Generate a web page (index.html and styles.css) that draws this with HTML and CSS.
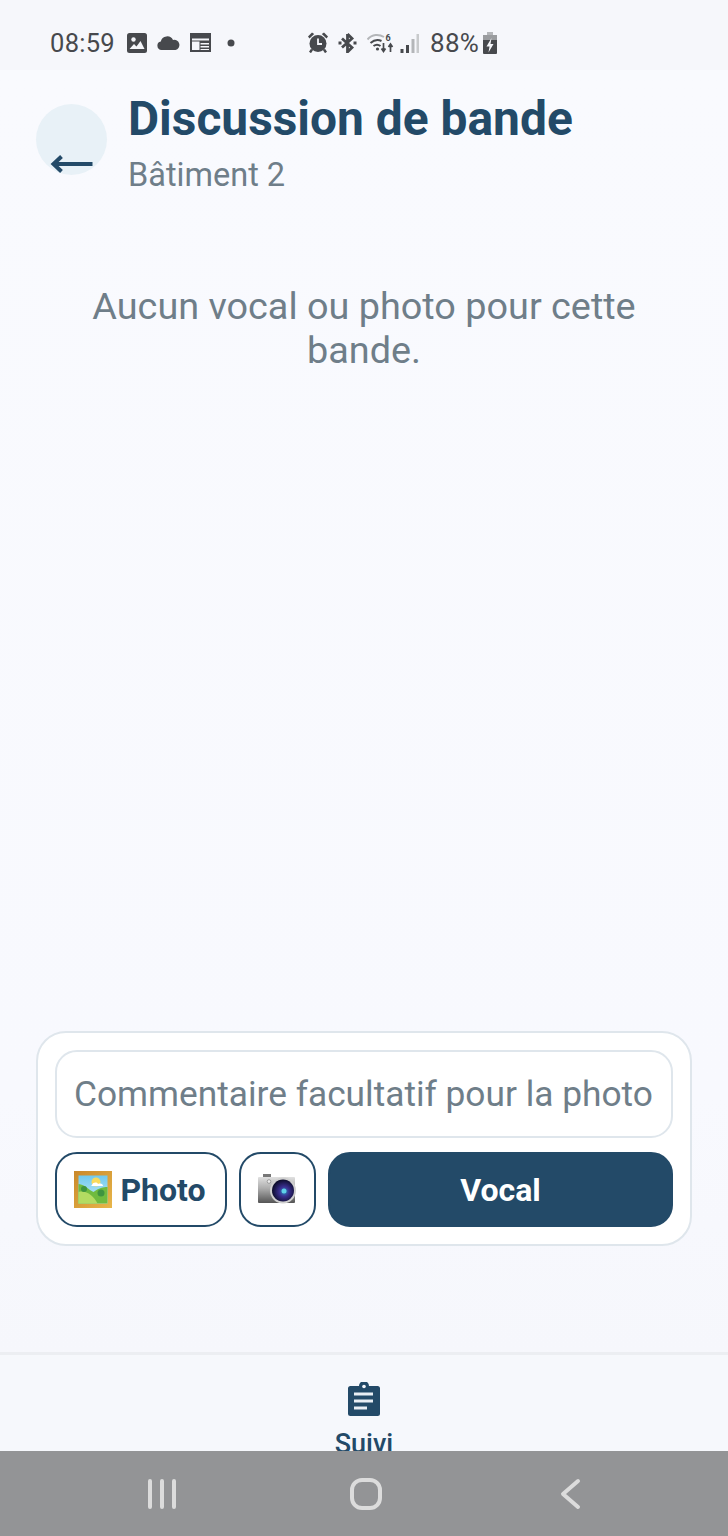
FILE: index.html
```html
<!DOCTYPE html>
<html lang="fr">
<head>
<meta charset="utf-8">
<title>Discussion de bande</title>
<link rel="stylesheet" href="styles.css">
</head>
<body>
<div class="screen">
  <div class="status">
    <div class="status-left">
      <span class="clock">08:59</span>
      <svg class="i-img" width="20" height="20" viewBox="0 0 20 20"><rect width="20" height="20" rx="2.500" fill="#47494d"/><circle cx="6.500" cy="6.500" r="2.200" fill="#f5f6fa"/><path d="M2.500 16l4.500-5 2.500 2.500 4-5.500 4 8z" fill="#f5f6fa"/></svg>
      <svg class="i-cloud" width="23" height="14" viewBox="0 0 23 14"><path d="M4.500 14A4.300 4.300 0 0 1 3.800 5.500 6.500 6.500 0 0 1 16 4a5 5 0 0 1 2.500 10z" fill="#47494d"/></svg>
      <svg class="i-cal" width="21" height="19" viewBox="0 0 21 19"><path d="M1 2h19v16H1z" fill="none" stroke="#47494d" stroke-width="2"/><path d="M0 0h21v5.500H0z" fill="#47494d"/><path d="M10.500 7.500h9v2.500h-9zM10.500 11.500h8.500v1.500h-8.500zM10.500 14.500h8.500v1.500h-8.500zM1 7.500h9v1H1zM9.500 7.500h1v10h-1z" fill="#47494d"/></svg>
      <svg class="i-dot" width="8" height="8" viewBox="0 0 8 8"><circle cx="4" cy="4" r="3.500" fill="#47494d"/></svg>
    </div>
    <div class="status-right">
      <svg class="i-alarm" width="20" height="21" viewBox="0 0 20 21"><circle cx="10" cy="11.500" r="8.500" fill="#47494d"/><path d="M10 6.500v5.500h4" fill="none" stroke="#f5f6fa" stroke-width="1.800"/><path d="M0 4.500L4 0.500l2.200 1.500L1.500 6.500zM20 4.500L16 0.500 13.800 2l4.700 4.500z" fill="#47494d"/><path d="M4 17.500l-2 3M16 17.500l2 3" stroke="#47494d" stroke-width="2.400"/></svg>
      <svg class="i-bt" width="19" height="20" viewBox="0 0 19 20"><path d="M9.500 1v18l4.500-4.500-10-9M9.500 1L14 5.500l-10 9" fill="none" stroke="#47494d" stroke-width="2.800"/><path d="M0.500 10h3M15.500 10h3" stroke="#47494d" stroke-width="3"/></svg>
      <svg class="i-wifi" width="27" height="22" viewBox="0 0 27 22"><path d="M0.500 7.500C5 2 12 2 17 5" fill="none" stroke="#b4b6b9" stroke-width="2"/><path d="M3.500 11c4-3.500 8-3.500 11-2M6.500 14c2-1.500 5-1.500 7 0" fill="none" stroke="#47494d" stroke-width="2"/><circle cx="10.500" cy="17" r="1.600" fill="#47494d"/><path d="M16.500 11v8M14.500 16.500l2 3 2-3M23.500 20v-7M21.500 15l2-3 2 3" fill="none" stroke="#47494d" stroke-width="1.700"/><text class="wifi-six" x="18.500" y="9">6</text></svg>
      <svg class="i-signal" width="19" height="22" viewBox="0 0 19 22"><path d="M0.500 17h3v4h-3z" fill="#47494d"/><path d="M6 13h3v8H6z" fill="#47494d"/><path d="M11.500 7h3v14h-3z" fill="#b4b6b9"/><path d="M16.500 2h2.500v19h-2.500z" fill="#c8cacc"/></svg>
      <span class="batt-text">88%</span>
      <svg class="i-batt" width="14" height="22" viewBox="0 0 14 22"><path d="M4 0h6v3H4z" fill="#b4b6b9"/><path d="M0 3h14v5H0z" fill="#9a9c9f"/><path d="M0 8h14v13a1 1 0 0 1-1 1H1a1 1 0 0 1-1-1z" fill="#47494d"/><path d="M8.500 6l-5 8.500h3l-1 6 5-8.500h-3z" fill="#f5f6fa"/></svg>
    </div>
  </div>

  <main class="main">
    <header class="head">
      <div class="back">
        <svg class="back-arrow" width="44" height="20" viewBox="0 0 44 20"><path d="M42.500 10H5" stroke="#234a68" stroke-width="4"/><path d="M11.500 2.500L3.500 10l8 7.500" fill="none" stroke="#234a68" stroke-width="4"/></svg>
      </div>
      <div class="head-text">
        <h1 class="title">Discussion de bande</h1>
        <p class="subtitle">Bâtiment 2</p>
      </div>
    </header>
    <p class="empty">Aucun vocal ou photo pour cette bande.</p>
    <section class="composer">
      <div class="field">Commentaire facultatif pour la photo</div>
      <div class="actions">
        <button class="btn btn-photo">
          <svg width="38" height="37" viewBox="0 0 38 37"><defs><linearGradient id="fr" x1="0" y1="0" x2="1" y2="1"><stop offset="0" stop-color="#c9882a"/><stop offset="1" stop-color="#e8b64a"/></linearGradient><linearGradient id="sky" x1="0" y1="0" x2="0" y2="1"><stop offset="0" stop-color="#6fc9f0"/><stop offset="1" stop-color="#c8ecf5"/></linearGradient></defs><rect width="38" height="37" fill="url(#fr)"/><rect x="4.500" y="4.500" width="29" height="28" fill="url(#sky)"/><circle cx="22" cy="11" r="4.500" fill="#f8da5c"/><path d="M18 14c1-3 5-3 6-1 3-1 5 0 5 2H17z" fill="#fff"/><path d="M4.500 13c7 .5 10 6 15 8 5-4 10-5 14-5v16.500h-29z" fill="#6fbb3f"/><path d="M4.500 21c8-2 15 4 19 11.500h-19z" fill="#b3dc62"/><circle cx="10" cy="18" r="3" fill="#3f9440"/><circle cx="27" cy="22" r="3.500" fill="#3f9440"/></svg>
          <span>Photo</span>
        </button>
        <button class="btn btn-cam">
          <svg width="38" height="31" viewBox="0 0 38 31"><defs><linearGradient id="cb" x1="0" y1="0" x2="0" y2="1"><stop offset="0" stop-color="#e0e0e0"/><stop offset=".45" stop-color="#ababab"/><stop offset="1" stop-color="#555"/></linearGradient><radialGradient id="cl" cx=".55" cy=".55" r=".55"><stop offset="0" stop-color="#2a8fc0"/><stop offset=".4" stop-color="#3a2f90"/><stop offset="1" stop-color="#0c0c2a"/></radialGradient></defs><rect x="5" y="0" width="8" height="3" fill="#777"/><rect x="0" y="3" width="37" height="26" rx="1" fill="url(#cb)"/><circle cx="11" cy="7.500" r="1.800" fill="#eee" stroke="#777" stroke-width=".6"/><circle cx="25" cy="16.500" r="13" fill="#d0d0d0"/><circle cx="25" cy="16.500" r="11" fill="url(#cl)"/><circle cx="26" cy="17" r="2.500" fill="#5fd0e8"/></svg>
        </button>
        <button class="btn btn-vocal">Vocal</button>
      </div>
    </section>
  </main>

  <nav class="tabbar">
    <div class="tab">
      <svg class="tab-icon" width="32" height="34" viewBox="0 0 32 34"><path d="M2.500 4H11a5 5 0 0 1 10 0h8.500A2.500 2.500 0 0 1 32 6.500v25a2.500 2.500 0 0 1-2.500 2.500h-27A2.500 2.500 0 0 1 0 31.500v-25A2.500 2.500 0 0 1 2.500 4z" fill="#234a68"/><circle cx="16" cy="4.500" r="1.800" fill="#f6f8fc"/><path d="M6 10.500h19v3H6zM6 17.500h19v3H6zM6 24.500h13v3H6z" fill="#e8eef4"/></svg>
      <span class="tab-label">Suivi</span>
    </div>
  </nav>

  <div class="sysnav">
    <svg width="32" height="32" viewBox="0 0 32 32"><path d="M4 3v26M16 3v26M28 3v26" stroke="#dcdcdc" stroke-width="4" stroke-linecap="round"/></svg>
    <svg width="32" height="32" viewBox="0 0 32 32"><rect x="2" y="2" width="28" height="28" rx="10" fill="none" stroke="#dcdcdc" stroke-width="4"/></svg>
    <svg class="nav-back" width="24" height="32" viewBox="0 0 24 32"><path d="M20 3L5 16l15 13" fill="none" stroke="#dcdcdc" stroke-width="4" stroke-linecap="round" stroke-linejoin="round"/></svg>
  </div>
</div>
</body>
</html>
```
FILE: styles.css
```css
* { box-sizing: border-box; }
html, body { margin: 0; padding: 0; }
body { font-family: Roboto, "Noto Sans", sans-serif; background: #f8f9fe; }
.screen { width: 728px; height: 1536px; display: flex; flex-direction: column; overflow: hidden; }

.status { height: 70px; flex: none; background: #f6f7fb; display: flex; align-items: center; padding: 15px 0 0 50px; color: #47494d; }
.status svg { flex: none; }
.status-left { display: flex; align-items: center; width: 258px; }
.clock { font-size: 25.500px; letter-spacing: 0.3px; margin-right: 12px; }
.i-cloud, .i-cal { margin-left: 10px; }
.i-dot { margin-left: 16px; }
.status-right { display: flex; align-items: center; }
.i-bt, .i-wifi { margin-left: 10px; }
.i-signal { margin-left: 6px; }
.wifi-six { font: 700 9px Roboto, sans-serif; fill: #47494d; }
.batt-text { font-size: 26px; letter-spacing: 0.3px; margin-left: 11px; }
.i-batt { margin-left: 4px; }

.main { flex: 1; min-height: 0; display: flex; flex-direction: column; background: linear-gradient(#f9fafe 0, #f8f9fe 80%, #f6f7fc 100%); padding: 0 36px; }
.head { display: flex; align-items: flex-start; gap: 22px; padding-top: 20px; }
.back { width: 71px; height: 71px; margin-top: 14px; border-radius: 50%; background: #e8f1f7; flex: none; display: flex; align-items: flex-end; justify-content: center; }
.back-arrow { margin: 0 0 1px 1px; }
.head-text { display: flex; flex-direction: column; margin-left: -1px; }
.title { margin: 0; font-size: 47.900px; line-height: 58px; font-weight: 700; color: #234a68; }
.subtitle { margin: 4px 0 0; font-size: 32.500px; line-height: 46px; color: #6f7e89; }

.empty { margin: 86px 0 0; padding: 0 30px; text-align: center; font-size: 37.800px; line-height: 44px; color: #6f7e89; flex: 1; }

.composer { background: #fff; border: 2px solid #dfe6ec; border-radius: 30px; padding: 17px; margin-bottom: 106px; display: flex; flex-direction: column; gap: 14px; }
.field { height: 88px; border: 2px solid #dfe6ec; border-radius: 22px; font-size: 35.300px; line-height: 84px; color: #6f7e89; padding-left: 17px; white-space: nowrap; overflow: hidden; }
.actions { display: flex; gap: 12px; height: 75px; }
.btn { font-family: inherit; font-weight: 700; font-size: 32px; border-radius: 22px; border: 2px solid #234a68; background: #fff; color: #234a68; display: flex; align-items: center; justify-content: center; padding: 0; }
.btn-photo { width: 172px; gap: 8px; padding-right: 2px; }
.btn-cam { width: 77px; padding-right: 2px; }
.btn-vocal { flex: 1; background: #234a68; color: #fff; }

.tabbar { height: 99px; flex: none; background: #f6f8fc; border-top: 3px solid #eceef2; overflow: hidden; display: flex; justify-content: center; }
.tab { display: flex; flex-direction: column; align-items: center; padding-top: 27px; }
.tab-icon { flex: none; }
.tab-label { flex: none; font-size: 27px; line-height: 36px; font-weight: 500; color: #234a68; margin-top: 10px; }

.sysnav { height: 85px; flex: none; background: #939496; display: flex; align-items: center; gap: 172px; padding-left: 146px; }
.nav-back { margin-left: 4px; }
```
